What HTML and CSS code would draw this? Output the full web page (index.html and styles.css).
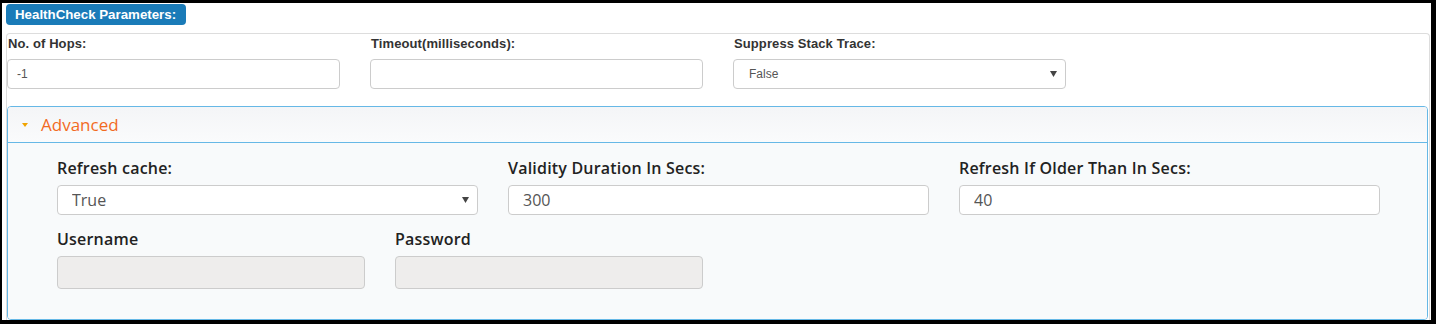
FILE: index.html
```html
<!DOCTYPE html>
<html lang="en">
<head>
    <meta charset="UTF-8">
    <meta content="width=device-width, initial-scale=1.0" name="viewport">
    <title>HealthCheck Parameters</title>
    <link rel="stylesheet" href="styles.css">
</head>
<body>
    <div class="frame">
        <div class="legend">HealthCheck Parameters:</div>
        <div class="fieldset">
            <div class="basic-row">
                <div class="field">
                    <label class="label">No. of Hops:</label>
                    <input class="input" type="text" value="-1">
                </div>
                <div class="field">
                    <label class="label">Timeout(milliseconds):</label>
                    <input class="input" type="text" value="">
                </div>
                <div class="field">
                    <label class="label">Suppress Stack Trace:</label>
                    <select class="input select">
                        <option>False</option>
                        <option>True</option>
                    </select>
                </div>
            </div>

            <div class="panel">
                <div class="panel-heading">
                    <span class="caret"></span>
                    <span class="panel-title">Advanced</span>
                </div>
                <div class="panel-body">
                    <div class="adv-row">
                        <div class="field">
                            <label class="adv-label">Refresh cache:</label>
                            <select class="adv-input select">
                                <option>True</option>
                                <option>False</option>
                            </select>
                        </div>
                        <div class="field">
                            <label class="adv-label">Validity Duration In Secs:</label>
                            <input class="adv-input" type="text" value="300">
                        </div>
                        <div class="field">
                            <label class="adv-label">Refresh If Older Than In Secs:</label>
                            <input class="adv-input" type="text" value="40">
                        </div>
                    </div>
                    <div class="cred-row">
                        <div class="field">
                            <label class="adv-label cred-label">Username</label>
                            <input class="adv-input cred-input" type="text" disabled>
                        </div>
                        <div class="field">
                            <label class="adv-label cred-label">Password</label>
                            <input class="adv-input cred-input" type="password" disabled>
                        </div>
                    </div>
                </div>
            </div>
        </div>
    </div>
</body>
</html>
```

FILE: styles.css
```css
html, body {
    margin: 0;
    padding: 0;
    background-color: #000;
}
.frame {
    box-sizing: border-box;
    height: 324px;
    border-style: solid;
    border-color: #000;
    border-width: 3px 5px 4px 2px;
    background-color: #fff;
    overflow: hidden;
    font-family: "Liberation Sans", Arial, sans-serif;
    color: #333;
}
.legend {
    display: inline-block;
    margin: 1px 0 0 4px;
    height: 21px;
    line-height: 21px;
    padding: 0 10px 0 9px;
    background-color: #1a7bb8;
    color: #fff;
    font-size: 13.3px;
    font-weight: bold;
    border-radius: 4px;
    vertical-align: top;
}
.fieldset {
    margin: 8px 1px 0 4px;
    height: 400px;
    border: 1px solid #dddddd;
    border-bottom: none;
    border-radius: 4px 4px 0 0;
    padding: 2px 0 0 0;
}
.basic-row {
    display: grid;
    grid-template-columns: repeat(3, 333px);
    column-gap: 30px;
}
.field {
    display: flex;
    flex-direction: column;
}
.label {
    font-size: 13px;
    font-weight: bold;
    line-height: 16px;
    margin: 0 0 7px 1px;
    letter-spacing: 0.1px;
}
.input {
    box-sizing: border-box;
    height: 30px;
    border: 1px solid #cccccc;
    border-radius: 4px;
    background-color: #fff;
    padding: 0 9px;
    font-family: "Liberation Sans", Arial, sans-serif;
    font-size: 12px;
    color: #555;
    outline: none;
}
.select {
    -webkit-appearance: none;
    appearance: none;
    padding-left: 15px;
    background-image: url("data:image/svg+xml;utf8,<svg xmlns='http://www.w3.org/2000/svg' width='7' height='6'><path d='M0 0h7L3.5 6z' fill='%23444'/></svg>");
    background-repeat: no-repeat;
    background-position: right 8px center;
}
.panel {
    margin: 17px 1px 0 0;
    border: 1px solid #66b8e6;
    border-radius: 4px;
    overflow: hidden;
}
.panel-heading {
    height: 35px;
    display: flex;
    align-items: center;
    padding-left: 14px;
    background: linear-gradient(#f4f5f7, #fafbfc);
    border-bottom: 1px solid #66b8e6;
}
.caret {
    width: 0;
    height: 0;
    border-left: 3px solid transparent;
    border-right: 3px solid transparent;
    border-top: 4px solid #f0a300;
    margin-right: 13px;
    margin-top: 1px;
}
.panel-title {
    font-family: "Open Sans", sans-serif;
    font-size: 17px;
    color: #f26b1f;
}
.panel-body {
    height: 176px;
    box-sizing: border-box;
    background-color: #f8fafb;
    padding: 15px 0 0 49px;
}
.adv-row {
    display: grid;
    grid-template-columns: repeat(3, 421px);
    column-gap: 30px;
}
.cred-row {
    display: grid;
    grid-template-columns: repeat(2, 308px);
    column-gap: 30px;
    margin-top: 14px;
}
.adv-label {
    font-family: "Open Sans", sans-serif;
    font-size: 16px;
    font-weight: 600;
    line-height: 20px;
    letter-spacing: 0.2px;
    margin-bottom: 7px;
    color: #222;
}
.adv-input {
    box-sizing: border-box;
    height: 30px;
    border: 1px solid #cccccc;
    border-radius: 4px;
    background-color: #fff;
    padding: 0 14px;
    font-family: "Open Sans", sans-serif;
    font-size: 16px;
    color: #555;
    outline: none;
}
.adv-input.select {
    padding-left: 14px;
}
.cred-input {
    height: 33px;
    background-color: #eeedec;
}
```
